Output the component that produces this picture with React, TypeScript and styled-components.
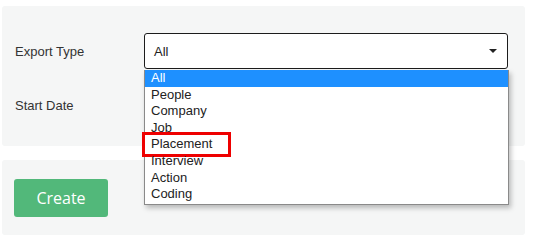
import React from 'react';
import styled, { createGlobalStyle } from 'styled-components';

const GlobalStyle = createGlobalStyle`
  body {
    margin: 0;
    background: #ffffff;
    font-family: 'Liberation Sans', Arial, sans-serif;
  }
`;

const Page = styled.div`
  width: 538px;
  height: 247px;
  padding: 6px 0 0 2px;
  box-sizing: border-box;
  display: flex;
  flex-direction: column;
  gap: 14px;
`;

const Panel = styled.div<{ pad: string }>`
  width: 523px;
  box-sizing: border-box;
  background: #f5f6f6;
  border-radius: 3px;
  padding: ${p => p.pad};
`;

const FormRow = styled.div`
  position: relative;
  display: grid;
  grid-template-columns: 129px 364px;
  align-items: center;
  height: 36px;
  & + & {
    margin-top: 18px;
  }
`;

const Label = styled.div`
  font-size: 13px;
  color: #333;
`;

const SelectBox = styled.div`
  height: 36px;
  box-sizing: border-box;
  border: 1.5px solid #1c1c1c;
  border-radius: 3px;
  background: #fff;
  display: flex;
  align-items: center;
  justify-content: space-between;
  padding: 0 10px 0 9px;
  font-size: 13px;
  color: #222;
`;

const Caret = styled.span`
  width: 0;
  height: 0;
  border-left: 4px solid transparent;
  border-right: 4px solid transparent;
  border-top: 4px solid #222;
`;

const Dropdown = styled.ul`
  position: absolute;
  left: 129px;
  top: 37px;
  width: 365px;
  margin: 0;
  padding: 0 0 1px;
  list-style: none;
  background: #fff;
  border: 1px solid #8a8a8a;
  border-top: none;
  box-sizing: border-box;
  box-shadow: 2px 3px 5px rgba(0, 0, 0, 0.25);
  z-index: 2;
`;

const Option = styled.li<{ active?: boolean }>`
  height: 16.6px;
  line-height: 16.6px;
  padding-left: 6px;
  font-size: 13px;
  color: ${p => (p.active ? '#fff' : '#222')};
  background: ${p => (p.active ? '#1e90ff' : 'transparent')};
  position: relative;
`;

const Highlight = styled.span`
  position: absolute;
  left: -3px;
  top: -4px;
  width: 89px;
  height: 25px;
  box-sizing: border-box;
  border: 3px solid #ee0000;
`;

const CreateButton = styled.button`
  width: 94px;
  height: 38px;
  border: none;
  border-radius: 3px;
  background: #52b87a;
  color: #fff;
  font-family: 'Open Sans', 'Noto Sans', sans-serif;
  font-size: 16px;
  cursor: pointer;
`;

const options = ['All', 'People', 'Company', 'Job', 'Placement', 'Interview', 'Action', 'Coding'];

const App: React.FC = () => {
  return (
    <>
      <GlobalStyle />
      <Page>
        <Panel pad="27px 0 23px 13px">
          <FormRow>
            <Label>Export Type</Label>
            <SelectBox>
              All
              <Caret />
            </SelectBox>
            <Dropdown>
              {options.map((o, i) => (
                <Option key={o} active={i === 0}>
                  {o}
                  {o === 'Placement' && <Highlight />}
                </Option>
              ))}
            </Dropdown>
          </FormRow>
          <FormRow>
            <Label>Start Date</Label>
            <SelectBox />
          </FormRow>
        </Panel>
        <Panel pad="19px 0 18px 12px">
          <CreateButton>Create</CreateButton>
        </Panel>
      </Page>
    </>
  );
};

export default App;
